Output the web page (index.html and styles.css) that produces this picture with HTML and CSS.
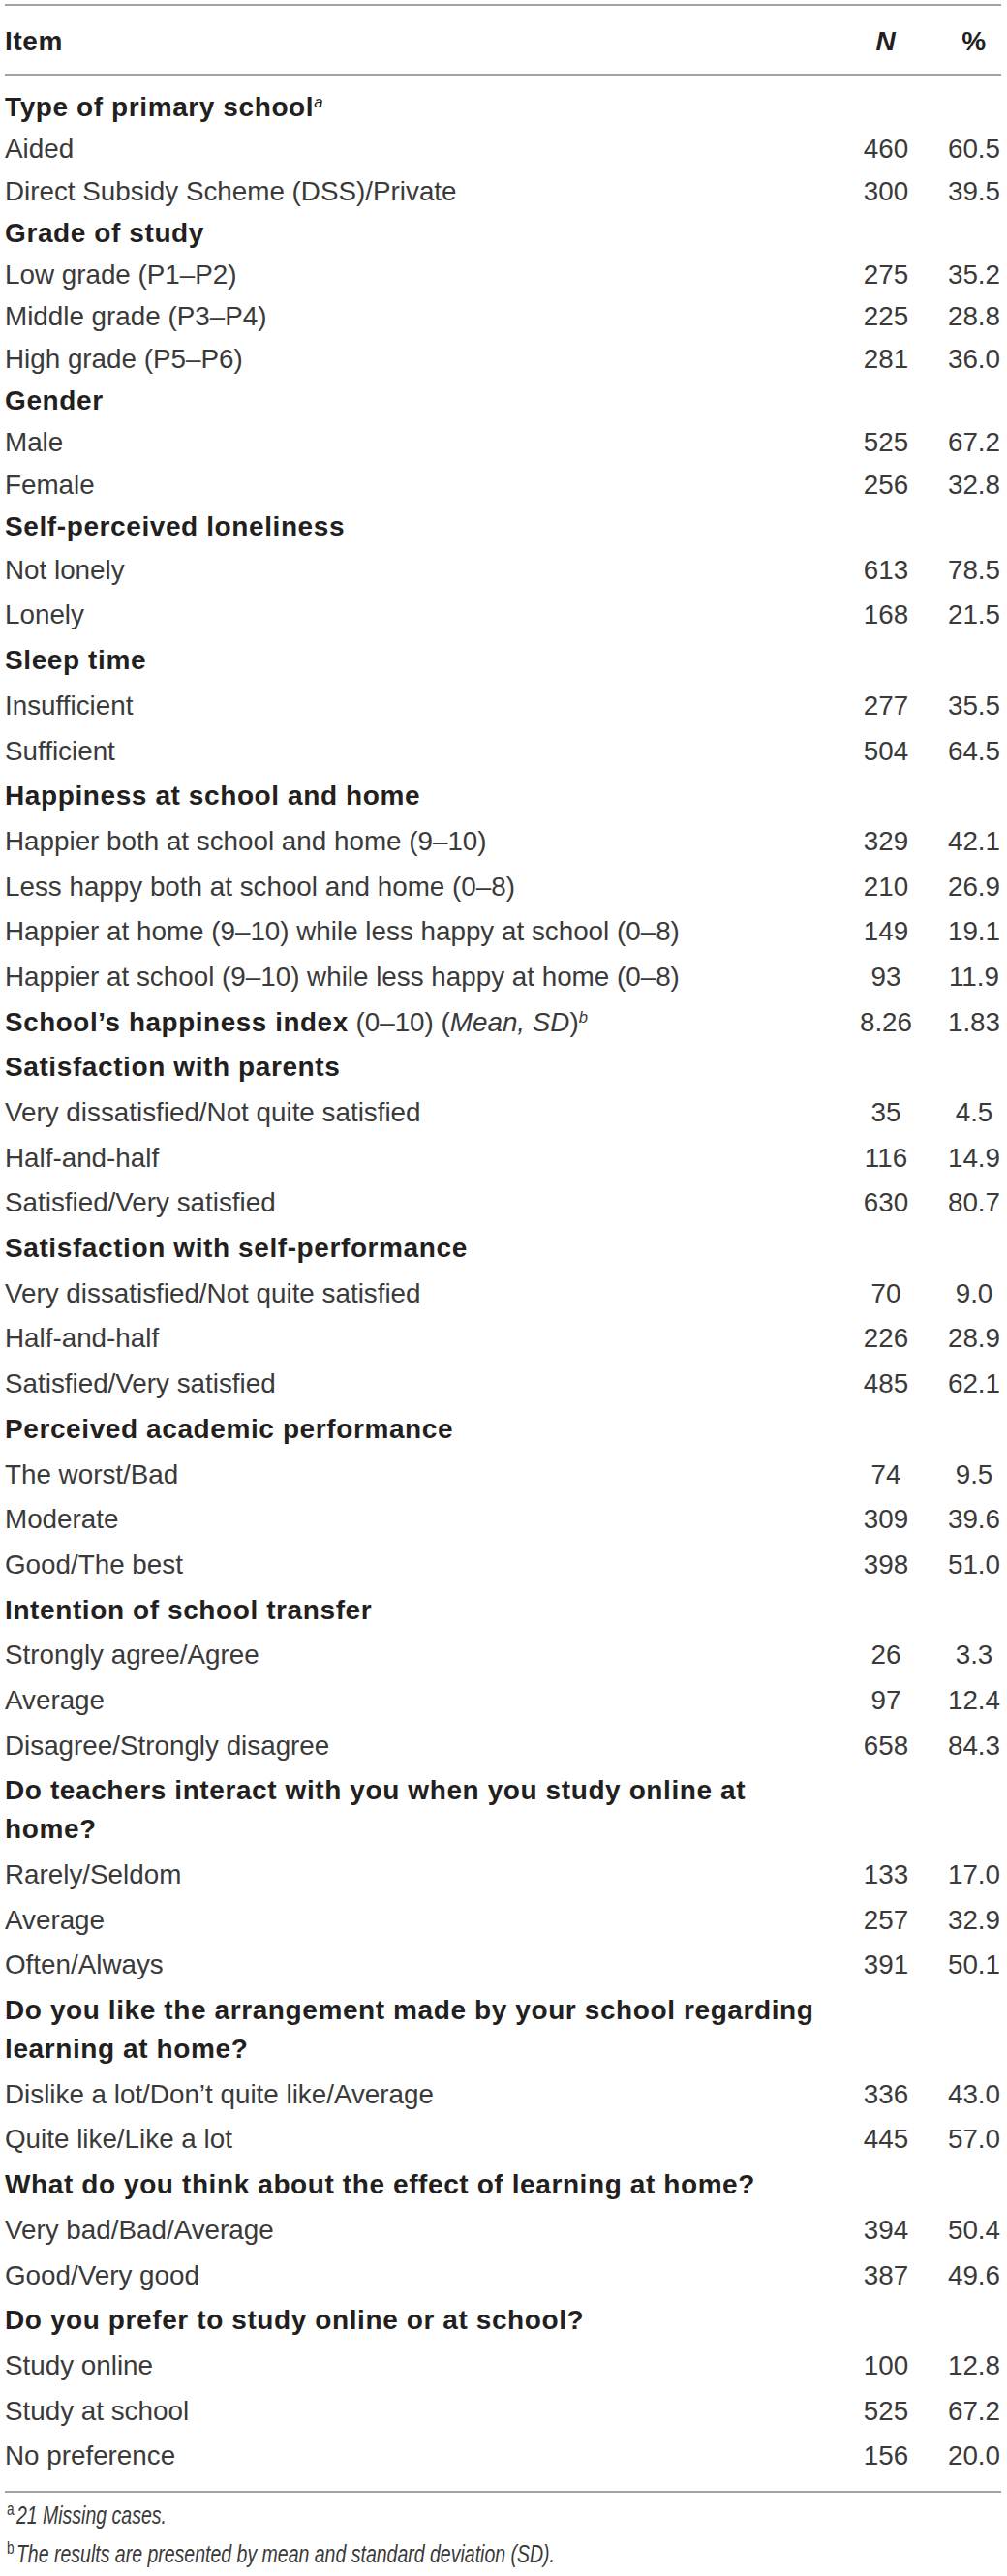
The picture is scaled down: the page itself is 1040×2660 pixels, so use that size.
FILE: index.html
```html
<!DOCTYPE html>
<html lang="en">
<head>
<meta charset="utf-8">
<title>Participant characteristics</title>
<link rel="stylesheet" href="styles.css">
</head>
<body>
<table class="data">
  <colgroup>
    <col class="c-item">
    <col class="c-n">
    <col class="c-pct">
  </colgroup>
  <thead>
    <tr>
      <th class="item">Item</th>
      <th class="num"><em>N</em></th>
      <th class="num">%</th>
    </tr>
  </thead>
  <tbody class="dense">
    <tr class="head"><td class="item">Type of primary school<sup class="ital">a</sup></td><td></td><td></td></tr>
    <tr><td class="item">Aided</td><td class="num">460</td><td class="num">60.5</td></tr>
    <tr><td class="item">Direct Subsidy Scheme (DSS)/Private</td><td class="num">300</td><td class="num">39.5</td></tr>
    <tr class="head"><td class="item">Grade of study</td><td></td><td></td></tr>
    <tr><td class="item">Low grade (P1–P2)</td><td class="num">275</td><td class="num">35.2</td></tr>
    <tr><td class="item">Middle grade (P3–P4)</td><td class="num">225</td><td class="num">28.8</td></tr>
    <tr><td class="item">High grade (P5–P6)</td><td class="num">281</td><td class="num">36.0</td></tr>
    <tr class="head"><td class="item">Gender</td><td></td><td></td></tr>
    <tr><td class="item">Male</td><td class="num">525</td><td class="num">67.2</td></tr>
    <tr><td class="item">Female</td><td class="num">256</td><td class="num">32.8</td></tr>
    <tr class="head"><td class="item">Self-perceived loneliness</td><td></td><td></td></tr>
  </tbody>
  <tbody class="main">
    <tr><td class="item">Not lonely</td><td class="num">613</td><td class="num">78.5</td></tr>
    <tr><td class="item">Lonely</td><td class="num">168</td><td class="num">21.5</td></tr>
    <tr class="head"><td class="item">Sleep time</td><td></td><td></td></tr>
    <tr><td class="item">Insufficient</td><td class="num">277</td><td class="num">35.5</td></tr>
    <tr><td class="item">Sufficient</td><td class="num">504</td><td class="num">64.5</td></tr>
    <tr class="head"><td class="item">Happiness at school and home</td><td></td><td></td></tr>
    <tr><td class="item">Happier both at school and home (9–10)</td><td class="num">329</td><td class="num">42.1</td></tr>
    <tr><td class="item">Less happy both at school and home (0–8)</td><td class="num">210</td><td class="num">26.9</td></tr>
    <tr><td class="item">Happier at home (9–10) while less happy at school (0–8)</td><td class="num">149</td><td class="num">19.1</td></tr>
    <tr><td class="item">Happier at school (9–10) while less happy at home (0–8)</td><td class="num">93</td><td class="num">11.9</td></tr>
    <tr><td class="item"><strong>School’s happiness index</strong> (0–10) (<em>Mean, SD</em>)<sup class="ital">b</sup></td><td class="num">8.26</td><td class="num">1.83</td></tr>
    <tr class="head"><td class="item">Satisfaction with parents</td><td></td><td></td></tr>
    <tr><td class="item">Very dissatisfied/Not quite satisfied</td><td class="num">35</td><td class="num">4.5</td></tr>
    <tr><td class="item">Half-and-half</td><td class="num">116</td><td class="num">14.9</td></tr>
    <tr><td class="item">Satisfied/Very satisfied</td><td class="num">630</td><td class="num">80.7</td></tr>
    <tr class="head"><td class="item">Satisfaction with self-performance</td><td></td><td></td></tr>
    <tr><td class="item">Very dissatisfied/Not quite satisfied</td><td class="num">70</td><td class="num">9.0</td></tr>
    <tr><td class="item">Half-and-half</td><td class="num">226</td><td class="num">28.9</td></tr>
    <tr><td class="item">Satisfied/Very satisfied</td><td class="num">485</td><td class="num">62.1</td></tr>
    <tr class="head"><td class="item">Perceived academic performance</td><td></td><td></td></tr>
    <tr><td class="item">The worst/Bad</td><td class="num">74</td><td class="num">9.5</td></tr>
    <tr><td class="item">Moderate</td><td class="num">309</td><td class="num">39.6</td></tr>
    <tr><td class="item">Good/The best</td><td class="num">398</td><td class="num">51.0</td></tr>
    <tr class="head"><td class="item">Intention of school transfer</td><td></td><td></td></tr>
    <tr><td class="item">Strongly agree/Agree</td><td class="num">26</td><td class="num">3.3</td></tr>
    <tr><td class="item">Average</td><td class="num">97</td><td class="num">12.4</td></tr>
    <tr><td class="item">Disagree/Strongly disagree</td><td class="num">658</td><td class="num">84.3</td></tr>
    <tr class="head"><td class="item">Do teachers interact with you when you study online at home?</td><td></td><td></td></tr>
    <tr><td class="item">Rarely/Seldom</td><td class="num">133</td><td class="num">17.0</td></tr>
    <tr><td class="item">Average</td><td class="num">257</td><td class="num">32.9</td></tr>
    <tr><td class="item">Often/Always</td><td class="num">391</td><td class="num">50.1</td></tr>
    <tr class="head"><td class="item">Do you like the arrangement made by your school regarding learning at home?</td><td></td><td></td></tr>
    <tr><td class="item">Dislike a lot/Don’t quite like/Average</td><td class="num">336</td><td class="num">43.0</td></tr>
    <tr><td class="item">Quite like/Like a lot</td><td class="num">445</td><td class="num">57.0</td></tr>
    <tr class="head"><td class="item">What do you think about the effect of learning at home?</td><td></td><td></td></tr>
    <tr><td class="item">Very bad/Bad/Average</td><td class="num">394</td><td class="num">50.4</td></tr>
    <tr><td class="item">Good/Very good</td><td class="num">387</td><td class="num">49.6</td></tr>
    <tr class="head"><td class="item">Do you prefer to study online or at school?</td><td></td><td></td></tr>
    <tr><td class="item">Study online</td><td class="num">100</td><td class="num">12.8</td></tr>
    <tr><td class="item">Study at school</td><td class="num">525</td><td class="num">67.2</td></tr>
    <tr><td class="item">No preference</td><td class="num">156</td><td class="num">20.0</td></tr>
  </tbody>
</table>
<div class="notes">
  <p class="note"><sup class="mark">a</sup><em>21 Missing cases.</em></p>
  <p class="note"><sup class="mark">b</sup><em>The results are presented by mean and standard deviation (SD).</em></p>
</div>
</body>
</html>
```

FILE: styles.css
```css
html, body {
  margin: 0;
  padding: 0;
  background: #ffffff;
}

body {
  font-family: "Liberation Sans", Arial, sans-serif;
  color: #3a3a3a;
  font-size: 27.8px;
  line-height: 40px;
}

.data {
  margin: 4px 0 0 5px;
  width: 1029px;
  border-collapse: collapse;
  table-layout: fixed;
}

.c-item { width: 847px; }
.c-n { width: 126px; }
.c-pct { width: 56px; }

.data th,
.data td {
  padding: 0;
  vertical-align: middle;
}

.data thead tr {
  border-top: 2px solid #a3a3a3;
  border-bottom: 2px solid #a3a3a3;
}

.data th {
  padding: 17px 0 13px;
  font-weight: 700;
  font-size: 28px;
  letter-spacing: 0.6px;
  color: #231f20;
}

.data th.item { text-align: left; }

.item { text-align: left; }

.num {
  text-align: center;
  white-space: nowrap;
}

.dense td {
  padding-top: 1.65px;
  padding-bottom: 1.65px;
}

.dense tr:first-child td {
  padding-top: 13px;
}

.main td {
  padding-top: 3.35px;
  padding-bottom: 3.35px;
}

.main tr:last-child {
  border-bottom: 2px solid #a3a3a3;
}

.main tr:last-child td {
  padding-bottom: 15.35px;
}

.head td.item,
.item strong {
  font-weight: 700;
  font-size: 28px;
  letter-spacing: 0.6px;
  color: #231f20;
}

.item strong {
  font-size: 1em;
}

sup {
  line-height: 0;
  font-size: 60%;
  vertical-align: 0.55em;
}

sup.ital {
  font-style: italic;
  font-weight: 400;
  letter-spacing: 0;
}

.notes {
  margin: 3px 0 0 7px;
}

.note {
  margin: 0;
  font-size: 25px;
  line-height: 40px;
  color: #3a3a3a;
  white-space: nowrap;
  transform: scaleX(0.78);
  transform-origin: left center;
}

.note em {
  font-style: italic;
}

.mark {
  font-size: 70%;
  vertical-align: 0.5em;
  margin-right: 3px;
}
```
